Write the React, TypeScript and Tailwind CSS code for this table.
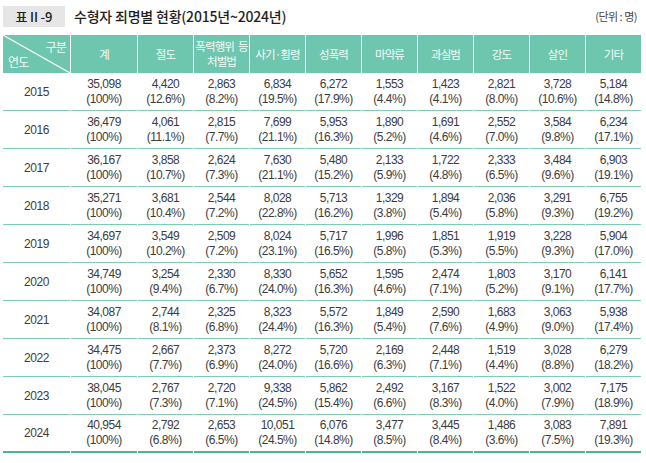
import React from "react";

const headers: React.ReactNode[] = [
  "계",
  "절도",
  <>
    폭력행위<span className="ml-[4px]">등</span>
    <br />
    처벌법
  </>,
  "사기·횡령",
  "성폭력",
  "마약류",
  "과실범",
  "강도",
  "살인",
  "기타",
];

const rows: [string, string[]][] = [
  ["2015", ["35,098|100%", "4,420|12.6%", "2,863|8.2%", "6,834|19.5%", "6,272|17.9%", "1,553|4.4%", "1,423|4.1%", "2,821|8.0%", "3,728|10.6%", "5,184|14.8%"]],
  ["2016", ["36,479|100%", "4,061|11.1%", "2,815|7.7%", "7,699|21.1%", "5,953|16.3%", "1,890|5.2%", "1,691|4.6%", "2,552|7.0%", "3,584|9.8%", "6,234|17.1%"]],
  ["2017", ["36,167|100%", "3,858|10.7%", "2,624|7.3%", "7,630|21.1%", "5,480|15.2%", "2,133|5.9%", "1,722|4.8%", "2,333|6.5%", "3,484|9.6%", "6,903|19.1%"]],
  ["2018", ["35,271|100%", "3,681|10.4%", "2,544|7.2%", "8,028|22.8%", "5,713|16.2%", "1,329|3.8%", "1,894|5.4%", "2,036|5.8%", "3,291|9.3%", "6,755|19.2%"]],
  ["2019", ["34,697|100%", "3,549|10.2%", "2,509|7.2%", "8,024|23.1%", "5,717|16.5%", "1,996|5.8%", "1,851|5.3%", "1,919|5.5%", "3,228|9.3%", "5,904|17.0%"]],
  ["2020", ["34,749|100%", "3,254|9.4%", "2,330|6.7%", "8,330|24.0%", "5,652|16.3%", "1,595|4.6%", "2,474|7.1%", "1,803|5.2%", "3,170|9.1%", "6,141|17.7%"]],
  ["2021", ["34,087|100%", "2,744|8.1%", "2,325|6.8%", "8,323|24.4%", "5,572|16.3%", "1,849|5.4%", "2,590|7.6%", "1,683|4.9%", "3,063|9.0%", "5,938|17.4%"]],
  ["2022", ["34,475|100%", "2,667|7.7%", "2,373|6.9%", "8,272|24.0%", "5,720|16.6%", "2,169|6.3%", "2,448|7.1%", "1,519|4.4%", "3,028|8.8%", "6,279|18.2%"]],
  ["2023", ["38,045|100%", "2,767|7.3%", "2,720|7.1%", "9,338|24.5%", "5,862|15.4%", "2,492|6.6%", "3,167|8.3%", "1,522|4.0%", "3,002|7.9%", "7,175|18.9%"]],
  ["2024", ["40,954|100%", "2,792|6.8%", "2,653|6.5%", "10,051|24.5%", "6,076|14.8%", "3,477|8.5%", "3,445|8.4%", "1,486|3.6%", "3,083|7.5%", "7,891|19.3%"]],
];

export default function App() {
  return (
    <div className="w-[646px] h-[463px] bg-white overflow-hidden">
      <div className="flex items-center h-[21px] mt-[6px] px-[3px]">
        <div className="w-[62px] h-[21px] bg-[#e6e6e6] flex items-center justify-center text-[13px] font-medium text-[#222] tracking-[0px] font-['Noto_Sans_CJK_KR','Noto_Sans',sans-serif]">
          표Ⅱ-9
        </div>
        <div className="ml-[9px] text-[14px] font-medium text-[#1e1e1e] tracking-[-0.2px] font-['Noto_Sans_CJK_KR','Noto_Sans',sans-serif]">
          수형자 죄명별 현황(2015년~2024년)
        </div>
        <div className="ml-auto mr-[6px] text-[11px] text-[#444] tracking-[-0.5px] font-['Noto_Sans_CJK_KR','Noto_Sans',sans-serif]">
          (단위 : 명)
        </div>
      </div>

      <div className="mt-[8px] ml-[3px] grid grid-cols-[67px_66px_repeat(9,55px)] gap-x-px">
        <div className="relative h-[38px] bg-[#6ec6ae] font-['Noto_Sans_CJK_KR','Noto_Sans',sans-serif] text-[12px] text-[#f4fbf8] tracking-[-0.8px]">
          <svg className="absolute inset-0" width="67" height="38" viewBox="0 0 67 38">
            <line x1="0" y1="0" x2="67" y2="38" stroke="#ffffff" strokeWidth="1.1" />
          </svg>
          <span className="absolute right-[4px] top-[3px]">구분</span>
          <span className="absolute left-[5px] bottom-[2px]">연도</span>
        </div>
        {headers.map((h, i) => (
          <div
            key={i}
            className="h-[38px] bg-[#6ec6ae] flex items-center justify-center text-center text-[11.5px] leading-[15px] text-[#f4fbf8] tracking-[-0.9px] font-['Noto_Sans_CJK_KR','Noto_Sans',sans-serif]"
          >
            <span>{h}</span>
          </div>
        ))}

        {rows.map(([year, cells], ri) => {
          const last = ri === rows.length - 1;
          return (
            <React.Fragment key={year}>
              <div
                className={
                  last
                    ? "h-[38px] flex items-center justify-center text-[12px] text-[#3c3c3c] tracking-[-0.4px] font-['Liberation_Sans',Arial,sans-serif] border-b-2 border-[#45b98c]"
                    : "h-[38px] flex items-center justify-center text-[12px] text-[#3c3c3c] tracking-[-0.4px] font-['Liberation_Sans',Arial,sans-serif] border-b border-[#7dceb0]"
                }
              >
                {year}
              </div>
              {cells.map((c, ci) => {
                const [a, b] = c.split("|");
                return (
                  <div
                    key={ci}
                    className={
                      last
                        ? "h-[38px] flex flex-col items-center justify-center text-[12px] leading-[15px] text-[#3c3c3c] tracking-[-0.5px] font-['Liberation_Sans',Arial,sans-serif] border-b-2 border-[#45b98c]"
                        : "h-[38px] flex flex-col items-center justify-center text-[12px] leading-[15px] text-[#3c3c3c] tracking-[-0.5px] font-['Liberation_Sans',Arial,sans-serif] border-b border-[#7dceb0]"
                    }
                  >
                    <span>{a}</span>
                    <span>({b})</span>
                  </div>
                );
              })}
            </React.Fragment>
          );
        })}
      </div>
    </div>
  );
}
